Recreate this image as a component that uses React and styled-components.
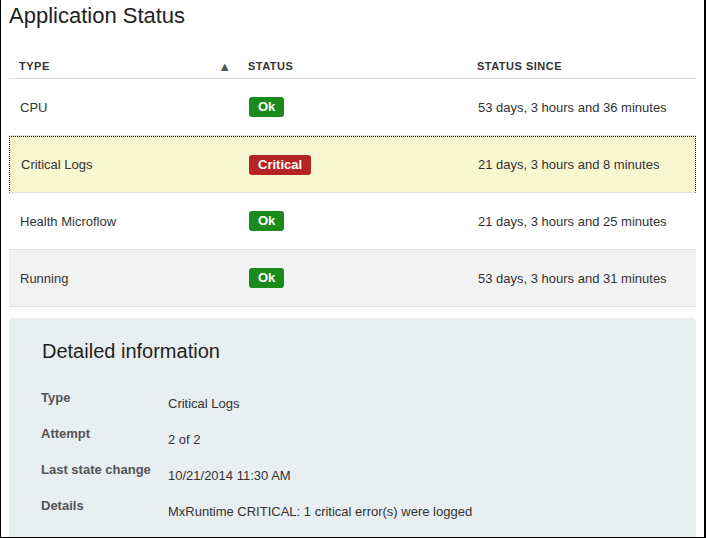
import styled, { createGlobalStyle } from 'styled-components';

const GlobalStyle = createGlobalStyle`
  html, body {
    margin: 0;
    padding: 0;
    background: #fff;
  }
  body {
    font-family: "Liberation Sans", Arial, sans-serif;
    color: #333;
  }
`;

const Frame = styled.div`
  box-sizing: border-box;
  width: 706px;
  height: 538px;
  overflow: hidden;
  border-left: 1px solid #000;
  border-right: 2px solid #000;
  border-bottom: 1px solid #000;
  padding: 0 8px;
`;

const Title = styled.h1`
  margin: 0;
  padding-top: 3px;
  font-size: 22px;
  line-height: 26px;
  font-weight: normal;
  color: #222;
`;

const Table = styled.div`
  margin-top: 23px;
`;

// the focused row loses 1px to its dotted border, so its first column shrinks
const Row = styled.div`
  box-sizing: border-box;
  display: grid;
  grid-template-columns: ${p => (p.$focus ? '228px' : '229px')} 229px 1fr;
  align-items: center;
  height: ${p => (p.$head ? '27px' : '57px')};
  border-bottom: 1px solid ${p => (p.$head ? '#dcdcdc' : '#e0e0e0')};
  background: ${p => p.$bg || 'transparent'};
  ${p => p.$focus && `
    border-top: 1px dotted #000;
    border-left: 1px dotted #000;
    border-right: 1px dotted #000;
  `}
`;

const HeadCell = styled.div`
  display: flex;
  align-items: center;
  justify-content: space-between;
  padding: 2px 7px 0 10px;
  font-size: 11px;
  font-weight: bold;
  letter-spacing: 0.5px;
  text-transform: uppercase;
  color: #333;
`;

const SortArrow = styled.span`
  font-size: 13px;
  line-height: 11px;
  color: #555;
  letter-spacing: 0;
`;

const Cell = styled.div`
  padding: 0 10px 0 11px;
  font-size: 13px;
  color: #333;
`;

const Badge = styled.span`
  display: inline-block;
  padding: 0 9px;
  height: 20px;
  line-height: 20px;
  border-radius: 3px;
  font-size: 13px;
  font-weight: bold;
  color: #fff;
  background: ${p => (p.$kind === 'critical' ? '#b42424' : '#1a8a1a')};
`;

const Panel = styled.section`
  margin-top: 11px;
  padding: 21px 32px 20px;
  background: #e9eef0;
  border-radius: 4px;
  min-height: 260px;
`;

const PanelTitle = styled.h2`
  margin: 0 0 27px 1px;
  font-size: 20px;
  line-height: 24px;
  font-weight: normal;
  color: #222;
`;

const InfoRow = styled.div`
  display: grid;
  grid-template-columns: 127px 1fr;
  height: 36px;
`;

const Label = styled.div`
  font-size: 13px;
  font-weight: bold;
  color: #555;
  line-height: 16px;
`;

const Value = styled.div`
  font-size: 13px;
  color: #333;
  line-height: 16px;
  padding-top: 6px;
`;

const rows = [
  { type: 'CPU', status: 'Ok', since: '53 days, 3 hours and 36 minutes' },
  { type: 'Critical Logs', status: 'Critical', since: '21 days, 3 hours and 8 minutes', focus: true, bg: '#f7f7d2' },
  { type: 'Health Microflow', status: 'Ok', since: '21 days, 3 hours and 25 minutes' },
  { type: 'Running', status: 'Ok', since: '53 days, 3 hours and 31 minutes', bg: '#f2f2f2' },
];

const details = [
  ['Type', 'Critical Logs'],
  ['Attempt', '2 of 2'],
  ['Last state change', '10/21/2014 11:30 AM'],
  ['Details', 'MxRuntime CRITICAL: 1 critical error(s) were logged'],
];

const App = () => {
  return (
    <>
      <GlobalStyle />
      <Frame>
        <Title>Application Status</Title>
        <Table>
          <Row $head>
            <HeadCell>Type <SortArrow>▲</SortArrow></HeadCell>
            <HeadCell>Status</HeadCell>
            <HeadCell>Status Since</HeadCell>
          </Row>
          {rows.map(r => (
            <Row key={r.type} $focus={r.focus} $bg={r.bg}>
              <Cell>{r.type}</Cell>
              <Cell>
                <Badge $kind={r.status === 'Critical' ? 'critical' : 'ok'}>{r.status}</Badge>
              </Cell>
              <Cell>{r.since}</Cell>
            </Row>
          ))}
        </Table>
        <Panel>
          <PanelTitle>Detailed information</PanelTitle>
          {details.map(([label, value]) => (
            <InfoRow key={label}>
              <Label>{label}</Label>
              <Value>{value}</Value>
            </InfoRow>
          ))}
        </Panel>
      </Frame>
    </>
  );
};

export default App;
